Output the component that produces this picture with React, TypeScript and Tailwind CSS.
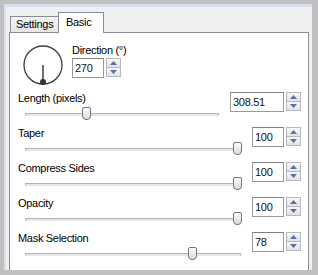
import React from 'react'

const rows = [
  { label: 'Length (pixels)', value: '308.51', wide: true, thumb: 64 },
  { label: 'Taper', value: '100', wide: false, thumb: 215 },
  { label: 'Compress Sides', value: '100', wide: false, thumb: 215 },
  { label: 'Opacity', value: '100', wide: false, thumb: 215 },
  { label: 'Mask Selection', value: '78', wide: false, thumb: 170 },
]

function Arrow({ up }: { up?: boolean }) {
  return (
    <svg width="7" height="4" viewBox="0 0 7 4" aria-hidden="true">
      <polygon points={up ? '3.5,0 7,4 0,4' : '0,0 7,0 3.5,4'} fill="#5670a8" />
    </svg>
  )
}

function SpinBox({ value, width }: { value: string; width: string }) {
  return (
    <div className="flex h-[20px]">
      <div className={`${width} h-full border border-[#9a9a9a] border-t-[#7f7f7f] bg-white pl-[2px] leading-[18px] text-[#111]`}>
        {value}
      </div>
      <div className="ml-[2px] flex w-[15px] flex-col">
        <div className="flex h-[10px] items-center justify-center border border-[#b5b8bc] bg-gradient-to-b from-[#f8f8f8] to-[#e3e3e3]">
          <Arrow up />
        </div>
        <div className="-mt-px flex h-[10px] items-center justify-center border border-[#b5b8bc] bg-gradient-to-b from-[#f8f8f8] to-[#e3e3e3]">
          <Arrow />
        </div>
      </div>
    </div>
  )
}

function Slider({ thumb }: { thumb: number }) {
  return (
    <div className="relative h-[17px]">
      <div className="absolute left-[7px] right-0 top-[8px] h-[3px] border border-[#b3b3b3] border-b-[#e4e4e4] bg-[#e9e9e9]" />
      <div
        className="absolute top-[2px] h-[13px] w-[9px] rounded-t-[2px] rounded-b-[4px] border border-[#767676] bg-gradient-to-b from-[#fbfbfb] to-[#dadada]"
        style={{ left: thumb }}
      />
    </div>
  )
}

export default function App() {
  return (
    <div className="h-[275px] w-[318px] overflow-hidden bg-[#c0c0c0] pl-[4px] pt-[4px] font-['Liberation_Sans',Arial,sans-serif] text-[11px] tracking-[-0.3px] text-black">
      <div className="h-[266px] w-[308px] overflow-hidden border-l-2 border-t-[3px] border-[#d8e0f0] bg-[#f0f0f0]">
        {/* Tabs */}
        <div className="ml-[4px] mt-[5px] flex h-[20px] items-end">
          <div className="h-[16px] w-[48px] border-l border-t border-[#898c95] bg-gradient-to-b from-[#f4f4f4] to-[#e6e6e6] pl-[5px] leading-[15px]">
            Settings
          </div>
          <div className="relative z-10 -mb-px h-[21px] w-[46px] border-x border-t border-[#898c95] bg-white pl-[7px] leading-[18px]">
            Basic
          </div>
        </div>

        {/* Pane */}
        <div className="ml-[3px] h-[260px] w-[300px] border border-[#898c95] bg-white pl-[8px] pr-[7px] pt-[11px]">
          <div className="flex">
            <svg width="42" height="42" viewBox="0 0 42 42" className="ml-[4px]" aria-hidden="true">
              <circle cx="21" cy="21" r="19" fill="none" stroke="#3c3c3c" strokeWidth="1.3" />
              <line x1="21" y1="21" x2="21" y2="38" stroke="#3c3c3c" strokeWidth="1.5" />
              <circle cx="21" cy="38" r="3" fill="#333" />
            </svg>
            <div className="ml-[8px] flex flex-col">
              <div className="h-[14px] leading-[13px]">Direction (°)</div>
              <SpinBox value="270" width="w-[32px]" />
            </div>
          </div>

          <div className="mt-[6px] flex flex-col gap-[5px]">
            {rows.map((r) => (
              <div key={r.label} className="flex items-start">
                <div className="flex flex-1 flex-col">
                  <div className="h-[13px] leading-[13px]">{r.label}</div>
                  <Slider thumb={r.thumb} />
                </div>
                <div className="ml-[11px]">
                  <SpinBox value={r.value} width={r.wide ? 'w-[54px]' : 'w-[32px]'} />
                </div>
              </div>
            ))}
          </div>
        </div>
      </div>
    </div>
  )
}
